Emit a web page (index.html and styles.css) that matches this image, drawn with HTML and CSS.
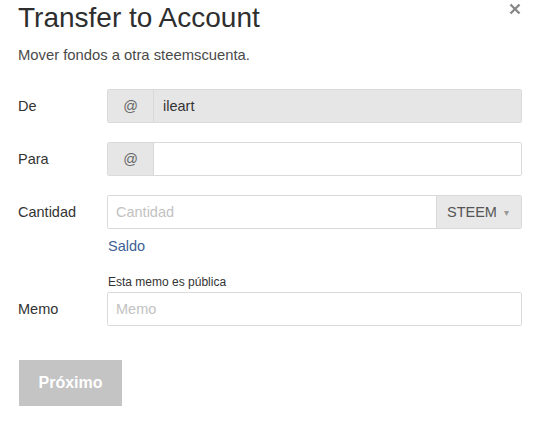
FILE: index.html
```html
<!DOCTYPE html>
<html lang="es">
<head>
<meta charset="utf-8">
<title>Transfer to Account</title>
<link rel="stylesheet" href="styles.css">
</head>
<body>
<div class="modal">
  <button class="close" type="button" aria-label="Cerrar">
    <svg width="12" height="12" viewBox="0 0 12 12"><path d="M1.5 1.5 L10.5 10.5 M10.5 1.5 L1.5 10.5" stroke="#888" stroke-width="2.4" stroke-linecap="butt"/></svg>
  </button>
  <h1 class="title">Transfer to Account</h1>
  <p class="subtitle">Mover fondos a otra steemscuenta.</p>

  <div class="row row-de">
    <label class="label">De</label>
    <div class="field">
      <div class="group">
        <span class="addon">@</span>
        <input class="input input-disabled" value="ileart" disabled>
      </div>
    </div>
  </div>

  <div class="row row-para">
    <label class="label">Para</label>
    <div class="field">
      <div class="group">
        <span class="addon">@</span>
        <input class="input">
      </div>
    </div>
  </div>

  <div class="row row-cantidad">
    <label class="label">Cantidad</label>
    <div class="field">
      <div class="group">
        <input class="input input-solo" placeholder="Cantidad">
        <span class="select">STEEM <span class="caret">▾</span></span>
      </div>
      <a class="saldo" href="#">Saldo</a>
    </div>
  </div>

  <div class="row row-memo">
    <label class="label">Memo</label>
    <div class="field">
      <div class="hint">Esta memo es pública</div>
      <div class="group">
        <input class="input input-solo" placeholder="Memo">
      </div>
    </div>
  </div>

  <button class="submit" type="button" disabled>Próximo</button>
</div>
</body>
</html>
```
FILE: styles.css
```css
* { box-sizing: border-box; }
html, body {
  margin: 0;
  padding: 0;
  background: #ffffff;
}
body {
  font-family: "Liberation Sans", Arial, sans-serif;
  color: #333;
  width: 546px;
  height: 422px;
  overflow: hidden;
}
.modal {
  position: relative;
  padding: 2px 24px 0 18px;
}
.close {
  position: absolute;
  top: 2px;
  right: 24px;
  width: 14px;
  height: 14px;
  padding: 1px;
  margin: 0;
  border: 0;
  background: transparent;
  display: flex;
  align-items: center;
  justify-content: center;
}
.title {
  margin: 0;
  font-size: 28px;
  line-height: 32px;
  font-weight: normal;
  color: #2e2e2e;
}
.subtitle {
  margin: 12px 0 0;
  font-size: 14.8px;
  line-height: 18px;
  color: #4a4a4a;
}
.row {
  display: flex;
  align-items: flex-start;
}
.row-de { margin-top: 25px; }
.row-para { margin-top: 19px; }
.row-cantidad { margin-top: 19px; }
.row-memo { margin-top: 20px; align-items: flex-end; }
.label {
  width: 89px;
  flex: 0 0 89px;
  font-size: 14.5px;
  line-height: 34px;
  color: #333;
}
.field {
  flex: 1;
  display: flex;
  flex-direction: column;
}
.group {
  display: flex;
  height: 34px;
  border: 1px solid #dadada;
  border-radius: 2px;
  overflow: hidden;
  box-shadow: inset 0 1px 2px rgba(0,0,0,0.06);
}
.addon {
  width: 46px;
  flex: 0 0 46px;
  display: flex;
  align-items: center;
  justify-content: center;
  background: #e6e6e6;
  border-right: 1px solid #d8d8d8;
  color: #666;
  font-size: 14.5px;
}
.input {
  flex: 1;
  min-width: 0;
  height: 100%;
  border: 0;
  margin: 0;
  padding: 0 9px;
  font-family: inherit;
  font-size: 14.5px;
  color: #333;
  background: #fff;
  outline: none;
}
.input-disabled {
  background: #e6e6e6;
  color: #333;
  -webkit-text-fill-color: #333;
  opacity: 1;
}
.input-solo { padding-left: 8px; }
.input::placeholder { color: #c2c2c2; }
.select {
  width: 85px;
  flex: 0 0 85px;
  display: flex;
  align-items: center;
  padding-left: 10px;
  background: #e8e8e8;
  border-left: 1px solid #dadada;
  color: #555;
  font-size: 14.5px;
}
.caret {
  color: #999;
  font-size: 10px;
  margin-left: 7px;
}
.saldo {
  margin-top: 9px;
  margin-left: 1px;
  font-size: 14.5px;
  line-height: 17px;
  color: #3d5f96;
  text-decoration: none;
  align-self: flex-start;
}
.hint {
  margin-left: 1px;
  font-size: 12px;
  line-height: 14px;
  color: #333;
  margin-bottom: 3px;
}
.submit {
  display: block;
  margin: 34px 0 0 1px;
  width: 103px;
  height: 46px;
  border: 0;
  border-radius: 0;
  background: #c4c4c4;
  color: #fff;
  font-family: inherit;
  font-weight: bold;
  font-size: 16px;
  padding: 0;
}
```
